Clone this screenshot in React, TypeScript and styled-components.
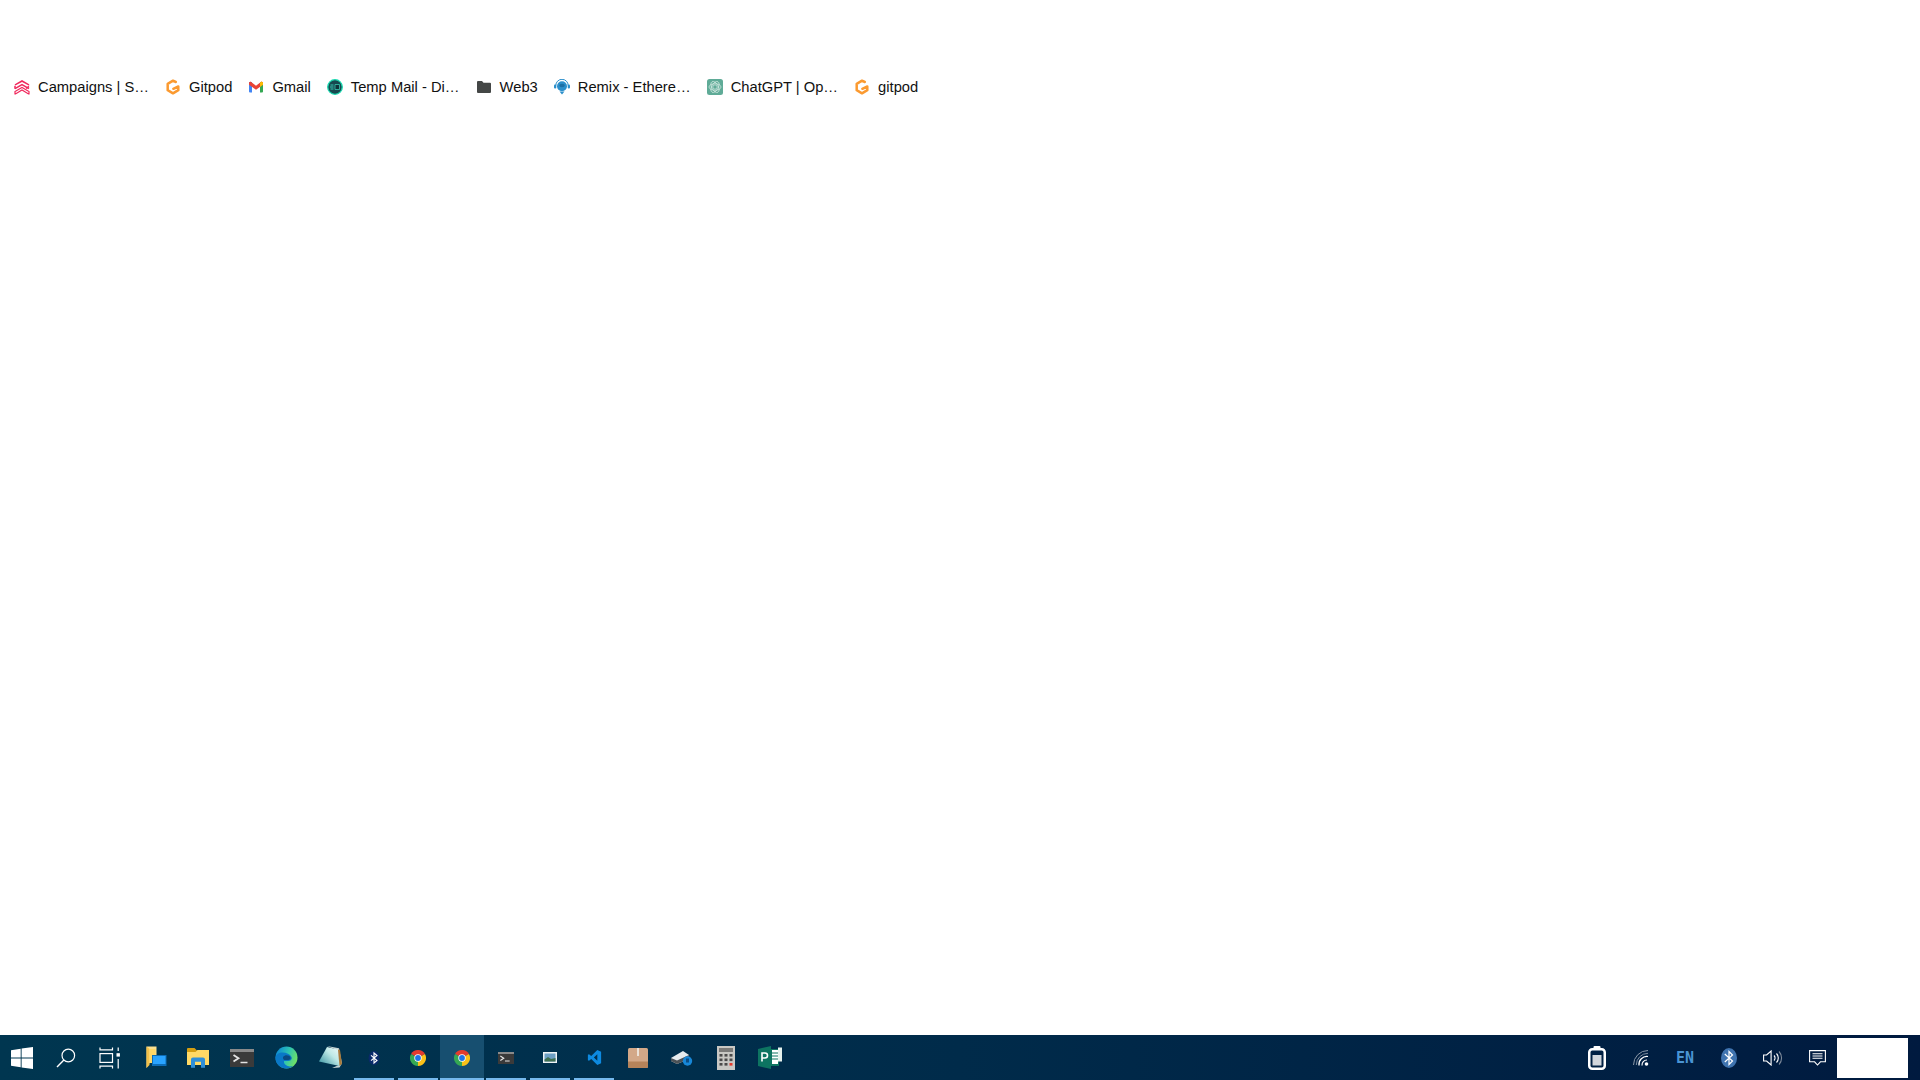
import React from 'react';
import styled, { createGlobalStyle } from 'styled-components';

const GlobalStyle = createGlobalStyle`
  html, body { margin: 0; padding: 0; height: 100%; background: #fff; }
  #root { height: 100%; }
`;

/* favicons */
const CampaignsIcon = () => (
  <svg width="16" height="16" viewBox="0 0 16 16" fill="none" stroke="#f0285c" strokeWidth="1.5">
    <path d="M.8 5.200 8 1l7.200 4.200v1.600L8 3 .8 6.800z" fill="#f0285c" stroke="none" />
    <path d="M1 9.700 8 5.700l7 4" />
    <path d="M1 7v2.700M15 7.500l-3 1.800" />
    <path d="M1 12.500V15h.5L8 11l6.500 4h.5v-2.500L8 8.500z" strokeWidth="1.200" />
  </svg>
);
const GitpodIcon = () => (
  <svg width="16" height="16" viewBox="0 0 16 16" fill="none">
    <path d="M10.800 3 8 1.700 2.700 4.800v6.400L8 14.300l5.300-3.100V7.500L8.300 9.800" stroke="#fb9a30" strokeWidth="2.500" strokeLinecap="round" strokeLinejoin="round" />
  </svg>
);
const GmailIcon = () => (
  <svg width="16" height="16" viewBox="0 0 16 16">
    <path d="M1 3h3v10.500H2a1 1 0 0 1-1-1z" fill="#4285f4" />
    <path d="M12 3h3v9.500a1 1 0 0 1-1 1h-2z" fill="#34a853" />
    <path d="M1 3.500 2.500 2.500 8 6.700l5.500-4.200L15 3.500v2.200L8 10.800 1 5.700z" fill="#ea4335" />
    <path d="M12 3.600 13.500 2.500 15 3.500v2.200l-3 2.200z" fill="#fbbc04" />
  </svg>
);
const TempMailIcon = () => (
  <svg width="16" height="16" viewBox="0 0 16 16">
    <circle cx="8" cy="8" r="7.300" fill="#17494f" stroke="#19d9b0" strokeWidth="1.300" />
    <path d="M3.500 6h3M3 8h3.500M3.500 10h3" stroke="#38c7b0" strokeWidth="1" />
    <path d="M8 5.500h4.500v5H8z" fill="#0f3238" stroke="#38c7b0" strokeWidth=".8" />
  </svg>
);
const FolderIcon = () => (
  <svg width="16" height="16" viewBox="0 0 16 16">
    <path d="M1 3a1 1 0 0 1 1-1h4l1.500 1.700H14a1 1 0 0 1 1 1V13a1 1 0 0 1-1 1H2a1 1 0 0 1-1-1z" fill="#444746" />
  </svg>
);
const RemixIcon = () => (
  <svg width="16" height="16" viewBox="0 0 16 16">
    <circle cx="8" cy="7.200" r="5" fill="#2b8fcb" />
    <path d="M1.800 6.500a6.200 6.200 0 0 1 12.400 0" fill="none" stroke="#2b8fcb" strokeWidth="1" />
    <rect x="0" y="5.500" width="2.300" height="4" rx="1" fill="#2b8fcb" />
    <rect x="13.700" y="5.500" width="2.300" height="4" rx="1" fill="#2b8fcb" />
    <path d="M5.500 12.600h5L8 15.500z" fill="#2b8fcb" />
    <ellipse cx="8" cy="6.500" rx="2.800" ry="1.700" fill="#1c6fa4" />
  </svg>
);
const ChatGptIcon = () => (
  <svg width="16" height="16" viewBox="0 0 16 16">
    <rect width="16" height="16" rx="2.500" fill="#5fab97" />
    <g fill="none" stroke="#e8f4f0" strokeWidth=".6">
      <circle cx="8" cy="8" r="2.200" />
      <ellipse cx="8" cy="8" rx="6" ry="3.300" />
      <ellipse cx="8" cy="8" rx="6" ry="3.300" transform="rotate(60 8 8)" />
      <ellipse cx="8" cy="8" rx="6" ry="3.300" transform="rotate(120 8 8)" />
    </g>
  </svg>
);

/* taskbar icons */
const WindowsIcon = () => (
  <svg width="22" height="22" viewBox="0 0 22 22" fill="#fff">
    <path d="M0 3.200 9.700 1.700v8.700H0zM10.600 1.500 22 0v10.400H10.600zM0 11.400h9.700v8.800L0 18.800zM10.600 11.400H22V22l-11.400-1.600z" />
  </svg>
);
const SearchIcon = () => (
  <svg width="20" height="20" viewBox="0 0 20 20" fill="none" stroke="#fff" strokeWidth="1.200">
    <circle cx="12.300" cy="7.500" r="6.300" />
    <path d="M7.900 12 1 19" strokeWidth="1.400" />
  </svg>
);
const TaskViewIcon = () => (
  <svg width="22" height="22" viewBox="0 0 22 22" fill="none" stroke="#fff" strokeWidth="1.200">
    <path d="M1 .6v2.200h12.500V.6M1 21.400v-2.200h12.500v2.200" />
    <rect x="1" y="6.600" width="12.500" height="8.800" />
    <rect x="17.500" y="6.200" width="3.400" height="3.400" fill="#fff" stroke="none" />
    <path d="M19.200.5v3.500M19.200 12v9.500" />
  </svg>
);
const QuickAccessIcon = () => (
  <svg width="25" height="23" viewBox="-4 0 25 23">
    <path d="M.5 .5h10v16.500H3.500l-3 5z" fill="#fbe08f" />
    <path d="M.5 .5 3.500 3v16l-3 3z" fill="#f2c04a" />
    <path d="M3.500 3h6v14h-6z" fill="#ffd766" />
    <rect x="6" y="9" width="14.500" height="11" fill="#0c6cb6" />
    <rect x="7" y="10" width="12.500" height="8" fill="#29a3ff" />
  </svg>
);
const ExplorerIcon = () => (
  <svg width="22" height="20" viewBox="0 0 22 20">
    <path d="M0 1a1 1 0 0 1 1-1h6.500l2.500 2.500H22V5H0z" fill="#d49e12" />
    <path d="M0 4h8.500l2-2H22v15H0z" fill="#ffd965" />
    <path d="M4 19.800V11.500a2 2 0 0 1 2-2h10a2 2 0 0 1 2 2v8.300h-4V13.700H8v6.100z" fill="#2e8fd8" />
  </svg>
);
const TerminalIcon = ({ small }: { small?: boolean }) => (
  <svg width={small ? 16 : 24} height={small ? 12 : 18} viewBox="0 0 24 18">
    <rect width="24" height="18" fill="#3a3a3a" />
    <rect width="24" height="3" fill="#8a8a8a" />
    <path d="m3.500 6 5 3.300-5 3.300" fill="none" stroke="#e4e4e4" strokeWidth="1.800" />
    <path d="M10.500 13.500h7" stroke="#e4e4e4" strokeWidth="1.500" />
  </svg>
);
const EdgeIcon = () => (
  <svg width="23" height="23" viewBox="0 0 23 23">
    <defs>
      <linearGradient id="edgeTop" x1="0" y1="0.300" x2="1" y2="0.700">
        <stop offset="0" stopColor="#0c8ad6" />
        <stop offset="0.5" stopColor="#2fc4b0" />
        <stop offset="1" stopColor="#78e65a" />
      </linearGradient>
    </defs>
    <circle cx="11.500" cy="11.500" r="11" fill="url(#edgeTop)" />
    <path d="M.5 12c0-3.500 3.500-5.500 7-5.500 4 0 7.500 1.500 9 4.500 1 2.500-1 4-4.500 4H9c-.5 2 1 4 3.500 5 2 .7 4 .3 5.500-.2-2 1.800-4 2.700-6.500 2.700C5.500 22.500.5 18 .5 12z" fill="#0a78c6" />
    <path d="M8 11c2-2.500 6.500-2 7.500.5.400 1.300-.6 2.500-2.500 2.600H9.500C8.500 14.100 7.800 12.500 8 11z" fill="#0a4a82" />
  </svg>
);
const NotepadIcon = () => (
  <svg width="23" height="23" viewBox="0 0 23 23">
    <defs>
      <linearGradient id="padFill" x1="0" y1="1" x2="1" y2="0">
        <stop offset="0" stopColor="#2e8d9c" />
        <stop offset="0.6" stopColor="#bfe9e6" />
        <stop offset="1" stopColor="#eef9f7" />
      </linearGradient>
    </defs>
    <path d="M8 0 20 2.300l3 15-2.500 4.200L13 22 20 19 18 4z" fill="#c9d6d6" />
    <path d="M8 1 19 3.500l1.500 16.500L0 15.500z" fill="url(#padFill)" />
    <path d="M20.500 20 19 3.500l2 .5 2 14z" fill="#a97b3c" />
  </svg>
);
const BluetoothBadge = () => (
  <svg width="12" height="14" viewBox="0 0 12 14">
    <ellipse cx="6" cy="7" rx="5.500" ry="7" fill="#0a2a6b" />
    <path d="M3 4.300 9 9.500 6 12V2l3 2.500L3 9.700" fill="none" stroke="#fff" strokeWidth="1.100" />
  </svg>
);
const ChromeIcon = () => (
  <svg width="16" height="16" viewBox="0 0 16 16">
    <path d="M8 8 1.070 4A8 8 0 0 1 14.930 4z" fill="#e33b2e" />
    <path d="M8 8 14.930 4A8 8 0 0 1 8 16z" fill="#fbc118" />
    <path d="M8 8v8A8 8 0 0 1 1.070 4z" fill="#35a853" />
    <circle cx="8" cy="8" r="3.700" fill="#fff" />
    <circle cx="8" cy="8" r="2.900" fill="#1f74e8" />
  </svg>
);
const ImageIcon = () => (
  <svg width="14" height="11" viewBox="0 0 14 11">
    <rect width="14" height="11" fill="#eef2f4" />
    <rect x="1.500" y="1.500" width="11" height="8" fill="#6d9fc4" />
    <path d="M1.500 7.500 5 5l3 2 4.500-1v3.500h-11z" fill="#3f6f50" />
  </svg>
);
const VsCodeIcon = () => (
  <svg width="15" height="15" viewBox="0 0 15 17">
    <path d="M10.700 0 15 2v13l-4.300 2-6.900-6.700L1.300 12.300 0 11.500V5.500l1.300-.8 2.500 2zM10.700 4.700 6.800 8.500l3.900 3.800z" fill="#0d8ae0" />
  </svg>
);
const PackageIcon = () => (
  <svg width="20" height="20" viewBox="0 0 20 20">
    <rect width="20" height="20" rx="1.500" fill="#d3a888" />
    <path d="M0 13.500h20V18.500a1.500 1.500 0 0 1-1.500 1.500h-17A1.500 1.500 0 0 1 0 18.500z" fill="#b5835a" />
    <rect x="9" y="0" width="2" height="8" fill="#ece2d8" />
  </svg>
);
const DriveIcon = () => (
  <svg width="22" height="16" viewBox="0 0 22 16">
    <path d="M0 8 12 1l6 4v4L6 14 0 11z" fill="#e6ecef" />
    <path d="M0 8l6 2.500 12-5.500v4L6 14l-6-3z" fill="#4a5156" />
    <circle cx="16.500" cy="11" r="4.700" fill="#1787d8" />
    <path d="M15 8.500h3v4h-3z" fill="#0b4d86" />
  </svg>
);
const CalculatorIcon = () => (
  <svg width="18" height="24" viewBox="0 0 18 24">
    <rect width="18" height="24" fill="#c8c8c4" />
    <rect x="2" y="2" width="14" height="4" fill="#7a7a78" />
    {[8, 12.5, 17].flatMap(y =>
      [2.5, 7.5, 12.5].map(x => (
        <rect key={`${x}-${y}`} x={x} y={y} width="3" height="2.600" fill={x === 12.5 && y === 17 ? '#e33b2e' : '#4a4a4a'} />
      ))
    )}
  </svg>
);
const PublisherIcon = () => (
  <svg width="24" height="23" viewBox="0 0 24 23">
    <path d="M0 3 13 0v23L0 20z" fill="#0d7461" />
    <rect x="13" y="3" width="8" height="17" fill="#0d7461" />
    <rect x="14" y="4" width="6" height="14" fill="#fff" />
    <rect x="20" y="1.500" width="4" height="14" fill="#e6f2ee" />
    <path d="M14 7h6M14 10h6M14 13h6" stroke="#0d7461" strokeWidth="1" />
    <path d="M4 15.500V7h3a2.500 2.500 0 0 1 0 5H4" fill="none" stroke="#fff" strokeWidth="1.600" />
  </svg>
);

/* tray icons */
const BatteryIcon = () => (
  <svg width="18" height="24" viewBox="0 0 18 24">
    <rect x="5.500" width="7" height="4" rx="1" fill="#fff" />
    <rect x="1.250" y="3.250" width="15.500" height="19.500" rx="3" fill="none" stroke="#fff" strokeWidth="2.500" />
    <rect x="4.500" y="9" width="9" height="10.500" fill="#d2d6dc" />
  </svg>
);
const WifiIcon = () => (
  <svg width="16" height="16" viewBox="0 0 16 16" fill="none" stroke="#8b98a8" strokeWidth="1">
    <path d="M.5 15A14.500 14.500 0 0 1 15 .5" />
    <path d="M3.300 15A11.700 11.700 0 0 1 15 3.300" opacity=".9" />
    <path d="M6 15.500a8 8 0 0 1 9-9" stroke="#fff" strokeWidth="1.200" />
    <path d="M9 15.500a5 5 0 0 1 5-5.500" stroke="#fff" strokeWidth="1.200" />
    <circle cx="13.500" cy="14" r="1.800" fill="#fff" stroke="none" />
  </svg>
);
const TrayBluetoothIcon = () => (
  <svg width="16" height="20" viewBox="0 0 16 20">
    <ellipse cx="8" cy="10" rx="8" ry="10" fill="#3f74b0" />
    <path d="M3.800 6 11.500 13 8 16.500v-13L11.500 7 3.800 14" fill="none" stroke="#fff" strokeWidth="1.200" />
  </svg>
);
const VolumeIcon = () => (
  <svg width="20" height="16" viewBox="0 0 20 16" fill="none" stroke="#fff" strokeWidth="1.100">
    <path d="M.6 5v6h3l4.500 4V1L3.600 5z" />
    <path d="M11 5.500a3.500 3.500 0 0 1 0 5" />
    <path d="M13.500 3.500a6.500 6.500 0 0 1 0 9" />
    <path d="M16 1.500a9.500 9.500 0 0 1 0 13" stroke="#7d8a9a" />
  </svg>
);
const NotificationIcon = () => (
  <svg width="17" height="16" viewBox="0 0 17 16" fill="none" stroke="#fff" strokeWidth="1.100">
    <path d="M.6.600h15.800v11.200h-5L8.500 15 5.600 11.800h-5z" />
    <path d="M3.500 3.800h10M3.500 6h10M3.500 8.300h10" />
  </svg>
);

const bookmarks: { icon: React.ReactNode; label: string }[] = [
  { icon: <CampaignsIcon />, label: 'Campaigns | S…' },
  { icon: <GitpodIcon />, label: 'Gitpod' },
  { icon: <GmailIcon />, label: 'Gmail' },
  { icon: <TempMailIcon />, label: 'Temp Mail - Di…' },
  { icon: <FolderIcon />, label: 'Web3' },
  { icon: <RemixIcon />, label: 'Remix - Ethere…' },
  { icon: <ChatGptIcon />, label: 'ChatGPT | Op…' },
  { icon: <GitpodIcon />, label: 'gitpod' },
];

const apps: { icon: React.ReactNode; running?: boolean; active?: boolean }[] = [
  { icon: <WindowsIcon /> },
  { icon: <SearchIcon /> },
  { icon: <TaskViewIcon /> },
  { icon: <QuickAccessIcon /> },
  { icon: <ExplorerIcon /> },
  { icon: <TerminalIcon /> },
  { icon: <EdgeIcon /> },
  { icon: <NotepadIcon /> },
  { icon: <BluetoothBadge />, running: true },
  { icon: <ChromeIcon />, running: true },
  { icon: <ChromeIcon />, running: true, active: true },
  { icon: <TerminalIcon small />, running: true },
  { icon: <ImageIcon />, running: true },
  { icon: <VsCodeIcon />, running: true },
  { icon: <PackageIcon /> },
  { icon: <DriveIcon /> },
  { icon: <CalculatorIcon /> },
  { icon: <PublisherIcon /> },
];

const App = () => (
  <Page>
    <GlobalStyle />
    <BookmarkBar>
      {bookmarks.map(b => (
        <Bookmark key={b.label}>
          <FavSlot>{b.icon}</FavSlot>
          <BookmarkLabel>{b.label}</BookmarkLabel>
        </Bookmark>
      ))}
    </BookmarkBar>
    <Taskbar>
      <AppList>
        {apps.map((a, i) => (
          <AppSlot key={i} $running={a.running} $active={a.active}>
            {a.icon}
          </AppSlot>
        ))}
      </AppList>
      <Tray>
        <TraySlot><BatteryIcon /></TraySlot>
        <TraySlot><WifiIcon /></TraySlot>
        <TraySlot><LangText>EN</LangText></TraySlot>
        <TraySlot><TrayBluetoothIcon /></TraySlot>
        <TraySlot><VolumeIcon /></TraySlot>
        <TraySlot><NotificationIcon /></TraySlot>
        <ClockBlank />
      </Tray>
    </Taskbar>
  </Page>
);

const Page = styled.div`
  height: 100vh;
  display: flex;
  flex-direction: column;
  justify-content: space-between;
  overflow: hidden;
  background: #fff;
`;

const BookmarkBar = styled.div`
  display: flex;
  align-items: center;
  padding: 75px 0 0 14px;
  height: 24px;
  gap: 16px;
  font-family: 'Liberation Sans', Arial, sans-serif;
  font-size: 14.72px;
  color: #111;
`;

const Bookmark = styled.div`
  display: flex;
  align-items: center;
  gap: 8px;
`;

const FavSlot = styled.span`
  width: 16px;
  height: 16px;
  display: flex;
  flex: none;
`;

const BookmarkLabel = styled.span`
  white-space: nowrap;
  line-height: 20px;
`;

const Taskbar = styled.div`
  height: 45px;
  flex: none;
  display: flex;
  justify-content: space-between;
  background: linear-gradient(to right, #003650 0%, #002b4a 50%, #001a3f 100%);
`;

const AppList = styled.div`
  display: flex;
`;

const AppSlot = styled.div<{ $running?: boolean; $active?: boolean }>`
  position: relative;
  width: 44px;
  height: 45px;
  display: flex;
  align-items: center;
  justify-content: center;
  background: ${p => (p.$active ? '#174f70' : 'transparent')};

  &::after {
    content: '';
    display: ${p => (p.$running ? 'block' : 'none')};
    position: absolute;
    bottom: 0;
    left: ${p => (p.$active ? '0' : '2px')};
    right: ${p => (p.$active ? '0' : '2px')};
    height: 2px;
    background: #76b9ed;
  }
`;

const Tray = styled.div`
  display: flex;
  align-items: center;
  padding-right: 12px;
`;

const TraySlot = styled.div`
  width: 44px;
  height: 45px;
  display: flex;
  align-items: center;
  justify-content: center;
`;

const LangText = styled.span`
  font-family: 'DejaVu Sans Mono', 'Liberation Mono', monospace;
  font-weight: 700;
  font-size: 15px;
  color: #4a94d4;
`;

const ClockBlank = styled.div`
  width: 71px;
  height: 40px;
  margin-left: -2px;
  background: #fff;
`;

export default App;
